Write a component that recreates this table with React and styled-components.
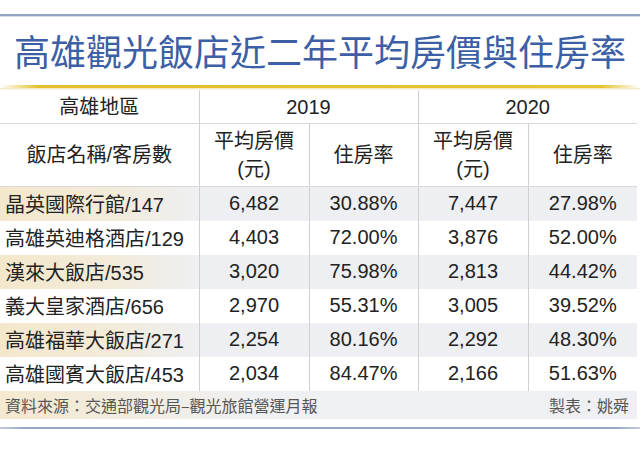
import styled, { createGlobalStyle } from 'styled-components';

const GlobalStyle = createGlobalStyle`
    html, body {
        margin: 0;
        padding: 0;
        background: #ffffff;
    }
    body {
        font-family: "Liberation Sans", "Noto Sans CJK TC", sans-serif;
        color: #222;
    }
`

const Page = styled.div`
    width: 640px;
    height: 460px;
    padding-top: 14px;
    box-sizing: border-box;
    overflow: hidden;
`

const TopRule = styled.div`
    height: 2px;
    background: #93a6c6;
    box-shadow: 0 1px 0 #d6deeb;
`

const Title = styled.h1`
    margin: 0;
    height: 69px;
    line-height: 69px;
    text-align: center;
    font-family: "Noto Sans CJK TC", sans-serif;
    font-size: 36px;
    font-weight: 400;
    color: #3c5fa6;
`

const GoldRule = styled.div`
    height: 3px;
    margin-bottom: 2px;
    background: linear-gradient(90deg, rgba(230,190,30,0) 0%, #e5bf2c 6%, #e8c431 94%, rgba(230,190,30,0) 100%);
    box-shadow: 0 1px 2px rgba(200,170,40,0.35);
`

const Table = styled.table`
    width: 637px;
    border-collapse: collapse;
    table-layout: fixed;
    font-size: 20px;
`

const HeadCell = styled.th`
    font-weight: normal;
    text-align: center;
    padding: 0;
    height: ${({tall}) => tall ? '62px' : '33px'};
    line-height: 28px;
    border-bottom: 1px solid #d9d9dc;
    border-left: ${({divider}) => divider ? '1px solid #cfcfd3' : 'none'};
`

const Row = styled.tr`
    height: 34px;
    background: ${({shaded}) => shaded ? '#eeeff2' : '#ffffff'};
`

const NameCell = styled.td`
    padding: 0 0 0 5px;
    text-align: left;
    white-space: nowrap;
    background: ${({shaded}) => shaded
        ? 'linear-gradient(90deg, #f4e8cb 0%, #f2ebd9 55%, #eeeff2 100%)'
        : 'transparent'};
`

const ValueCell = styled.td`
    padding: 0;
    text-align: center;
    border-left: 1px solid #cfcfd3;
`

const FootRow = styled.tr`
    height: 28px;
`

const FootCell = styled.td`
    padding: 0;
    background: linear-gradient(90deg, #f4e9cf 0%, #eff0f2 40%, #eef0f3 100%);
`

const FootInner = styled.div`
    display: flex;
    justify-content: space-between;
    align-items: center;
    padding: 0 8px 0 5px;
    font-family: "Noto Sans CJK TC", sans-serif;
    font-size: 16px;
    color: #555;
`

const BottomRule = styled.div`
    height: 2px;
    margin-top: 8px;
    background: linear-gradient(90deg, #c3cde0 0%, #93a6c6 4%, #93a6c6 96%, #c3cde0 100%);
`

const hotels = [
    ['晶英國際行館/147', '6,482', '30.88%', '7,447', '27.98%'],
    ['高雄英迪格酒店/129', '4,403', '72.00%', '3,876', '52.00%'],
    ['漢來大飯店/535', '3,020', '75.98%', '2,813', '44.42%'],
    ['義大皇家酒店/656', '2,970', '55.31%', '3,005', '39.52%'],
    ['高雄福華大飯店/271', '2,254', '80.16%', '2,292', '48.30%'],
    ['高雄國賓大飯店/453', '2,034', '84.47%', '2,166', '51.63%'],
];

const App = () => {
    return (
        <Page>
            <GlobalStyle />
            <TopRule />
            <Title>高雄觀光飯店近二年平均房價與住房率</Title>
            <GoldRule />
            <Table>
                <colgroup>
                    <col style={{width: 199}} />
                    <col style={{width: 110}} />
                    <col style={{width: 109}} />
                    <col style={{width: 110}} />
                    <col style={{width: 109}} />
                </colgroup>
                <thead>
                    <tr>
                        <HeadCell>高雄地區</HeadCell>
                        <HeadCell colSpan={2} divider>2019</HeadCell>
                        <HeadCell colSpan={2} divider>2020</HeadCell>
                    </tr>
                    <tr>
                        <HeadCell tall>飯店名稱/客房數</HeadCell>
                        <HeadCell tall divider>平均房價<br />(元)</HeadCell>
                        <HeadCell tall divider>住房率</HeadCell>
                        <HeadCell tall divider>平均房價<br />(元)</HeadCell>
                        <HeadCell tall divider>住房率</HeadCell>
                    </tr>
                </thead>
                <tbody>
                    {hotels.map((row, index) => {
                        const shaded = index % 2 === 0;
                        return (
                            <Row key={index} shaded={shaded}>
                                <NameCell shaded={shaded}>{row[0]}</NameCell>
                                {row.slice(1).map((value, i) => (
                                    <ValueCell key={i}>{value}</ValueCell>
                                ))}
                            </Row>
                        )
                    })}
                    <FootRow>
                        <FootCell colSpan={5}>
                            <FootInner>
                                <span>資料來源：交通部觀光局–觀光旅館營運月報</span>
                                <span>製表：姚舜</span>
                            </FootInner>
                        </FootCell>
                    </FootRow>
                </tbody>
            </Table>
            <BottomRule />
        </Page>
    );
}

export default App;
